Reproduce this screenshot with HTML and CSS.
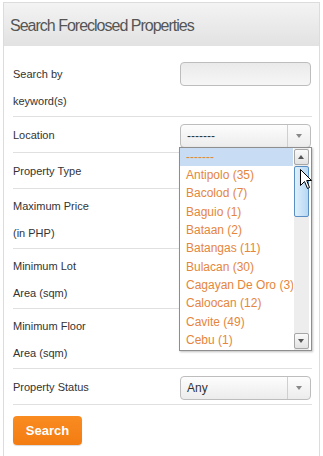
FILE: index.html
```html
<!DOCTYPE html>
<html lang="en">
<head>
  <meta charset="UTF-8" />
  <title>Search Foreclosed Properties</title>
  <link rel="stylesheet" href="styles.css">
</head>
<body>
  <div class="panel">
    <div class="panel-head">
      <h2>Search Foreclosed Properties</h2>
    </div>

    <form class="panel-body" id="searchForm">
      <div class="row">
        <label>Search by<br>keyword(s)</label>
        <div class="field"><input type="text" class="txt" /></div>
      </div>

      <div class="row single">
        <label>Location</label>
        <div class="field drop-host">
          <div class="sel"><span>-------</span><i class="arr"></i></div>
          <ul class="dropdown">
            <li class="on">-------</li>
            <li>Antipolo (35)</li>
            <li>Bacolod (7)</li>
            <li>Baguio (1)</li>
            <li>Bataan (2)</li>
            <li>Batangas (11)</li>
            <li>Bulacan (30)</li>
            <li>Cagayan De Oro (3)</li>
            <li>Caloocan (12)</li>
            <li>Cavite (49)</li>
            <li>Cebu (1)</li>
          </ul>
          <div class="scroll">
            <div class="sbtn up"></div>
            <div class="thumb"></div>
            <div class="sbtn down"></div>
          </div>
          <svg class="cursor" width="13" height="21" viewBox="0 0 13 21">
            <path d="M0.5 0.5 L0.5 16.5 L4.5 12.5 L7.5 19.5 L9.5 18.5 L6.7 11.5 L11.5 11.5 Z" fill="#fff" stroke="#000" stroke-width="1"/>
          </svg>
        </div>
      </div>

      <!-- controls below sit under the open list -->
      <div class="row single">
        <label>Property Type</label>
        <div class="field"><div class="sel"><span></span><i class="arr"></i></div></div>
      </div>

      <div class="row">
        <label>Maximum Price<br>(in PHP)</label>
        <div class="field"><input type="text" class="txt" /></div>
      </div>

      <div class="row">
        <label>Minimum Lot<br>Area (sqm)</label>
        <div class="field"><input type="text" class="txt" /></div>
      </div>

      <div class="row">
        <label>Minimum Floor<br>Area (sqm)</label>
        <div class="field"><input type="text" class="txt" /></div>
      </div>

      <div class="row single">
        <label>Property Status</label>
        <div class="field"><div class="sel"><span>Any</span><i class="arr"></i></div></div>
      </div>

      <button type="submit" class="btn">Search</button>
    </form>
  </div>
</body>
</html>
```

FILE: styles.css
```css
body {
  margin: 0;
  background: #fff;
  font-family: "Liberation Sans", Arial, sans-serif;
  color: #333;
}

.panel {
  margin: 2px 0 0 3px;
  width: 315px;
  height: 470px;
  border: 1px solid #dcdcdc;
  border-bottom: none;
}

.panel-head {
  height: 43px;
  background: linear-gradient(#f3f3f3, #e2e2e2);
}

.panel-head h2 {
  margin: 0;
  padding-left: 6px;
  font-size: 16px;
  font-weight: normal;
  line-height: 45px;
  letter-spacing: -1px;
  color: #555;
}

.panel-body {
  padding: 11px 7px 0 9px;
}

.row {
  display: flex;
  align-items: flex-start;
  padding: 4px 0 1px;
  border-bottom: 1px solid #e0e0e0;
}

.row.single {
  align-items: center;
  padding: 5px 0 3px;
}

.row label {
  width: 167px;
  font-size: 11px;
  line-height: 27px;
  color: #333;
}

.row .field {
  width: 131px;
  padding-top: 1px;
}

.row.single .field {
  padding-top: 0;
}

.txt {
  box-sizing: border-box;
  display: block;
  width: 131px;
  height: 24px;
  margin: 0;
  border: 1px solid #bdbdbd;
  border-radius: 4px;
  background: linear-gradient(#eaeaea, #f6f6f6);
}

.sel {
  box-sizing: border-box;
  position: relative;
  width: 131px;
  height: 24px;
  border: 1px solid #bdbdbd;
  border-radius: 4px;
  background: linear-gradient(#fdfdfd, #ececec);
  font-size: 12px;
  line-height: 22px;
  padding-left: 6px;
  color: #333;
}

.sel .arr {
  position: absolute;
  top: 0;
  right: 0;
  width: 22px;
  height: 22px;
  border-left: 1px solid #cfcfcf;
}

.sel .arr::after {
  content: "";
  position: absolute;
  left: 8px;
  top: 9px;
  border-left: 3.5px solid transparent;
  border-right: 3.5px solid transparent;
  border-top: 4px solid #888;
}

.drop-host {
  position: relative;
}

.dropdown {
  position: absolute;
  z-index: 5;
  top: 23px;
  left: -1px;
  width: 131px;
  height: 202px;
  margin: 0;
  padding: 0;
  list-style: none;
  background: #fff;
  border: 1px solid #8e8e8e;
  box-shadow: 1px 1px 2px rgba(0, 0, 0, 0.25);
  overflow: hidden;
}

.dropdown li {
  width: 107px;
  padding-left: 6px;
  font-size: 12px;
  line-height: 18.35px;
  color: #e5863c;
  white-space: nowrap;
  overflow: hidden;
}

.dropdown li.on {
  background: #c8dcf3;
}

.scroll {
  position: absolute;
  z-index: 6;
  top: 24px;
  left: 114px;
  width: 15px;
  height: 202px;
  background: #ededed;
}

.sbtn {
  position: absolute;
  left: 0;
  width: 13px;
  height: 14px;
  border: 1px solid #a6a6a6;
  border-radius: 2px;
  background: linear-gradient(#fafafa, #e2e2e2);
}

.sbtn.up { top: 1px; }
.sbtn.down { bottom: 1px; }

.sbtn::after {
  content: "";
  position: absolute;
  left: 3px;
  top: 5px;
  border-left: 3.5px solid transparent;
  border-right: 3.5px solid transparent;
}

.sbtn.up::after { border-bottom: 4px solid #555; }
.sbtn.down::after { border-top: 4px solid #555; }

.thumb {
  position: absolute;
  left: 0;
  top: 18px;
  width: 13px;
  height: 49px;
  border: 1px solid #5a8fc4;
  border-radius: 2px;
  background: linear-gradient(90deg, #dff0fc, #b6d8f3);
}

.cursor {
  position: absolute;
  z-index: 7;
  top: 45px;
  left: 120px;
}

.btn {
  margin-top: 11px;
  width: 69px;
  height: 29px;
  border: none;
  border-radius: 4px;
  background: linear-gradient(#f98c22, #f37c12);
  color: #fff;
  font-family: "Liberation Sans", Arial, sans-serif;
  font-size: 13px;
  font-weight: bold;
  box-shadow: 0 1px 1px rgba(0, 0, 0, 0.15);
  cursor: pointer;
}
```
